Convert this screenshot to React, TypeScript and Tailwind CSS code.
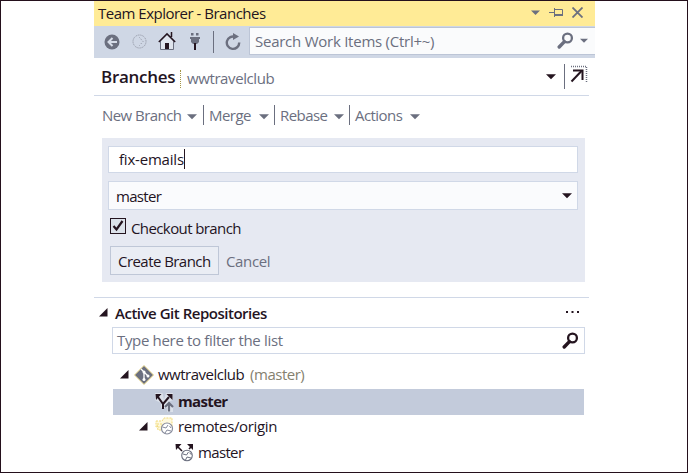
import type { ReactNode } from "react";

function Caret({ className = "" }: { className?: string }) {
  return (
    <svg className={`shrink-0 ${className}`} width="11" height="6" viewBox="0 0 11 6" fill="currentColor">
      <path d="M0 0h11L5.5 5.5z" />
    </svg>
  );
}

function Expander() {
  return (
    <svg className="shrink-0 text-[#24141f]" width="9" height="9" viewBox="0 0 9 9" fill="currentColor">
      <path d="M8.5 0v8.5H0z" />
    </svg>
  );
}

function Search({ className = "" }: { className?: string }) {
  return (
    <svg className={`shrink-0 ${className}`} width="17" height="17" viewBox="0 0 17 17" fill="none" stroke="currentColor">
      <circle cx="10.5" cy="6" r="4.4" strokeWidth="2.3" />
      <path d="M7.4 9.6 2.2 15" strokeWidth="3.4" strokeLinecap="round" />
    </svg>
  );
}

function MenuItem({ label, className }: { label: string; className: string }) {
  return (
    <div className={`flex h-5 shrink-0 items-center justify-between ${className}`}>
      <span>{label}</span>
      <Caret className="mt-[3px] w-[10px]" />
    </div>
  );
}

function Rule({ className = "" }: { className?: string }) {
  return <div className={`w-px shrink-0 bg-[#6b6f7f] ${className}`} />;
}

function Row({ children, className = "" }: { children: ReactNode; className?: string }) {
  return <div className={`flex h-[26px] items-center pb-[2px] ${className}`}>{children}</div>;
}

function BranchIcon({ remote = false }: { remote?: boolean }) {
  return remote ? (
    <svg className="shrink-0" width="19" height="19" viewBox="0 0 19 19" fill="none">
      <path d="M2 3l5 5M17 3l-3 3" stroke="#24141f" strokeWidth="1.6" />
      <path d="M0.500 1h6L1 7zM12 1h6v6z" fill="#24141f" />
      <circle cx="12" cy="12.500" r="5.300" fill="#fff" stroke="#6b6f7f" strokeWidth="1.100" />
      <path d="M8 11l3.500 1 2-3M10.500 17l1.500-3 4 1M14.500 10l2 1.500" stroke="#6b6f7f" />
    </svg>
  ) : (
    <svg className="mt-[2px] shrink-0" width="19" height="19" viewBox="0 0 19 19" fill="none">
      <path d="M0 0h7.500l1.500 7 2-7h7v7l-5 2 5 4v6h-6v-4H6v-5L0 7z" fill="#dce1ea" />
      <path d="M8 16v-5L3 4M8 11l6-7" stroke="#24141f" strokeWidth="2" />
      <path d="M0.500 1h6L1 7zM11.500 1h6v6z" fill="#24141f" />
      <path d="M14 18.500V11M10 14l4-4 4 4" stroke="#6b6f7f" strokeWidth="2.200" />
    </svg>
  );
}

export default function App() {
  return (
    <div className="relative h-[473px] w-[688px] overflow-hidden border border-[#24101c] bg-white pl-[93px] font-['Open_Sans','Noto_Sans',sans-serif] text-[15px] leading-5 whitespace-nowrap text-[#24141f]">
      <div className="absolute -top-px left-[93px] h-px w-[501px] bg-[#6b6f7f]" />
      <div className="absolute -bottom-px left-[93px] h-px w-[501px] bg-[#6b6f7f]" />

      <div className="w-[501px]">
        <header className="flex h-[25px] items-center bg-[#ffeb96] pb-[2px] pl-1">
          <span className="w-[433px] tracking-[-0.5px]">Team Explorer - Branches</span>
          <Caret className="w-[9px] text-[#6b6f7f]" />
          <svg className="ml-[9px]" width="15" height="11" viewBox="0 0 15 11" fill="none" stroke="#6b6f7f">
            <path d="M0 5.500h5M5.500 1v9M5.500 2.500h8v6" />
            <path d="M5 8h9" strokeWidth="2" />
          </svg>
          <svg className="ml-[8px]" width="11" height="11" viewBox="0 0 11 11" stroke="#6b6f7f" strokeWidth="1.800">
            <path d="m.5.5 10 10M10.500.5l-10 10" />
          </svg>
        </header>

        <div className="flex h-8 items-start bg-[#cfd7e5]">
          <div className="flex h-[31px] w-[155px] shrink-0 items-center">
            <svg className="ml-[10px]" width="16" height="16" viewBox="0 0 16 16">
              <circle cx="8" cy="8" r="7.500" fill="#6b6f7f" />
              <path d="M13 8H4.500M8.500 4l-4 4 4 4" fill="none" stroke="#d6dce8" strokeWidth="2" />
            </svg>
            <svg className="ml-[12px]" width="15" height="15" viewBox="0 0 15 15" fill="none" stroke="#8a8e9c">
              <circle cx="7.500" cy="7.500" r="6.500" strokeDasharray="1 1" />
              <path d="M7.500 3.500 11 7.500l-3.500 4" strokeDasharray="1 1.500" />
            </svg>
            <svg className="ml-[11px]" width="18" height="19" viewBox="0 0 18 19" fill="none">
              <path d="M2.500 9v8.500h13V9L9 2.500z" fill="#dfe4ed" stroke="#6b6f7f" />
              <path d="M.8 10 9 1.800 17.200 10M13.500 0v5" stroke="#24141f" strokeWidth="1.500" />
              <path d="M7 11h4v6H7z" fill="#24141f" />
            </svg>
            <svg className="ml-[13px]" width="12" height="19" viewBox="0 0 12 19" fill="#6b6f7f">
              <path d="M2 1h2.500v2.500H2zM7 1h2.500v2.500H7zM1 5h10v2h-1v3L8 12H4L2 10V7H1z" />
              <path d="M5 11h2v7H5z" fill="#24141f" />
            </svg>
            <Rule className="ml-[12px] h-[22px]" />
            <svg className="ml-[11px]" width="16" height="18" viewBox="0 0 16 18" fill="none" stroke="#6b6f7f">
              <path d="M10.500 4A6.200 6.200 0 1 0 14.200 9.500" strokeWidth="2.400" />
              <path d="M8 0v7l6-3.500z" fill="#6b6f7f" stroke="none" />
            </svg>
          </div>
          <div className="mt-px flex h-[28px] flex-1 items-center border-y border-l border-[#bcc5d6] bg-[#fafbfc] pb-[2px] pl-[5px] text-[#6b6f7f]">
            <span className="w-[302px] pt-[2px] tracking-[-0.25px]">Search Work Items (Ctrl+~)</span>
            <Search />
            <Caret className="mt-[2px] ml-[6px] w-[8px]" />
          </div>
        </div>

        <div className="flex h-[38px] w-[495px] items-center border-b border-[#d0d8e7] pl-[7px]">
          <span className="w-[79px] pt-px text-[17px] font-semibold tracking-[-0.3px]">Branches</span>
          <div className="mt-[4px] h-[18px] border-l border-dotted border-[#a49545]" />
          <span className="ml-[6px] w-[359px] pt-[3px] tracking-[-0.4px] text-[#6b6f7f]">wwtravelclub</span>
          <Caret className="w-[10px]" />
          <Rule className="ml-[8px] h-[25px]" />
          <svg className="mb-[5px] ml-[5px] shrink-0" width="18" height="19" viewBox="0 0 18 19" fill="none">
            <path d="M1 1.500h15.500V18" stroke="#6b6f7f" strokeDasharray="1 1" strokeWidth="1.500" />
            <path d="M1.500 16.500 11.500 6" stroke="#24141f" strokeWidth="2" />
            <path d="M3 5.500h9.500v9.500" stroke="#24141f" strokeWidth="2" />
          </svg>
        </div>

        <nav className="flex h-[42px] items-center pb-[4px] pl-2 tracking-[-0.55px] text-[#6b6f7f]">
          <MenuItem label="New Branch" className="w-[95px]" />
          <Rule className="ml-[6px] h-5" />
          <MenuItem label="Merge" className="ml-[5px] w-[60px]" />
          <Rule className="ml-[5px] h-5" />
          <MenuItem label="Rebase" className="ml-[5px] w-[64px]" />
          <Rule className="ml-[5px] h-5" />
          <MenuItem label="Actions" className="ml-[5px] w-[65px]" />
        </nav>

        <section className="ml-2 flex h-[144px] w-[483px] flex-col bg-[#e6e9f2] pt-2 pl-[6px]">
          <div className="flex h-[27px] w-[470px] items-center border border-[#d0d8e7] bg-white pb-[2px] pl-[10px]">
            <span className="tracking-[-0.2px]">fix-emails</span>
            <div className="h-5 w-px bg-[#24141f]" />
          </div>
          <div className="mt-2 flex h-[29px] w-[470px] items-center justify-between border border-[#d0d8e7] bg-[#fafbfd] pr-[5px] pl-[7px]">
            <span className="tracking-[-0.7px]">master</span>
            <Caret className="w-[10px]" />
          </div>
          <div className="mt-[7px] ml-[2px] flex h-[20px] items-center">
            <div className="mb-[3px] flex size-4 items-center justify-center border-[1.5px] border-[#24141f] bg-[#dce2ea]">
              <svg width="12" height="12" viewBox="0 0 12 12" fill="none" stroke="#24141f" strokeWidth="2.200">
                <path d="m1.500 6 3 3.500L10.500 1" />
              </svg>
            </div>
            <span className="ml-[5px] pt-[2px] tracking-[-0.6px]">Checkout branch</span>
          </div>
          <div className="mt-[9px] ml-[2px] flex h-[29px] items-center">
            <div className="flex h-[29px] w-[109px] items-center border border-[#bfc7d7] bg-[#eaedf4] pt-px pl-[7px] tracking-[-0.55px]">Create Branch</div>
            <span className="ml-[7px] tracking-[-0.35px] text-[#6b6f7f]">Cancel</span>
          </div>
        </section>

        <section className="mt-[15px] w-[495px] border-t border-[#d0d8e7]">
          <div className="flex h-[29px] items-center pl-[5px]">
            <Expander />
            <span className="ml-[7px] w-[451px] font-semibold tracking-[-0.48px]">Active Git Repositories</span>
            <svg width="14" height="3" viewBox="0 0 14 3" fill="#24141f">
              <path d="M0 0h2v2H0zM5.500 0h2v2h-2zM11 0h2v2h-2z" />
            </svg>
          </div>
          <div className="ml-[18px] flex h-[27px] w-[473px] items-center justify-between border border-[#d0d8e7] pr-[5px] pb-px pl-1">
            <span className="tracking-[-0.33px] text-[#6b6f7f]">Type here to filter the list</span>
            <Search />
          </div>
        </section>

        <div className="mt-[8px] ml-[19px] w-[471px]">
          <Row className="pl-[7px]">
            <Expander />
            <svg className="mt-[2px] ml-[5px] shrink-0" width="20" height="20" viewBox="0 0 20 20">
              <path d="m10 .5 9.500 9.500-9.500 9.500L.5 10z" fill="#6b6f7f" stroke="#efdc8c" />
              <path d="m7 4 3 3v8M10 7l4 4" stroke="#fff" strokeWidth="1.300" fill="none" />
              <circle cx="10" cy="7" r="1.500" fill="#fff" />
              <circle cx="14" cy="11" r="1.500" fill="#fff" />
              <circle cx="10" cy="14.500" r="1.500" fill="#fff" />
            </svg>
            <span className="ml-[4px] tracking-[-0.5px]">wwtravelclub</span>
            <span className="ml-[6px] tracking-[-0.5px] text-[#85816f]">(master)</span>
          </Row>
          <Row className="mt-px bg-[#c3cbdb] pl-[42px]">
            <BranchIcon />
            <span className="ml-[4px] font-bold tracking-[-0.65px]">master</span>
          </Row>
          <Row className="-mt-px pl-[26px]">
            <Expander />
            <svg className="ml-[7px] shrink-0" width="19" height="18" viewBox="0 0 19 18" fill="none">
              <path d="M1 4h6l2-3h8v9H1zM2 7h5v6H3z" fill="#fff9de" stroke="#f0d978" strokeDasharray="2 1" />
              <circle cx="12" cy="11.500" r="5.500" fill="#fff" stroke="#878b9b" strokeWidth="1.200" />
              <path d="m7.500 10 3.500 1 2-3M10 16l2-3 4 1M14.500 9l1.500 2" stroke="#878b9b" />
            </svg>
            <span className="ml-[4px] tracking-[-0.35px]">remotes/origin</span>
          </Row>
          <Row className="pl-[62px]">
            <BranchIcon remote />
            <span className="ml-[4px] tracking-[-0.65px]">master</span>
          </Row>
        </div>
      </div>
    </div>
  );
}
